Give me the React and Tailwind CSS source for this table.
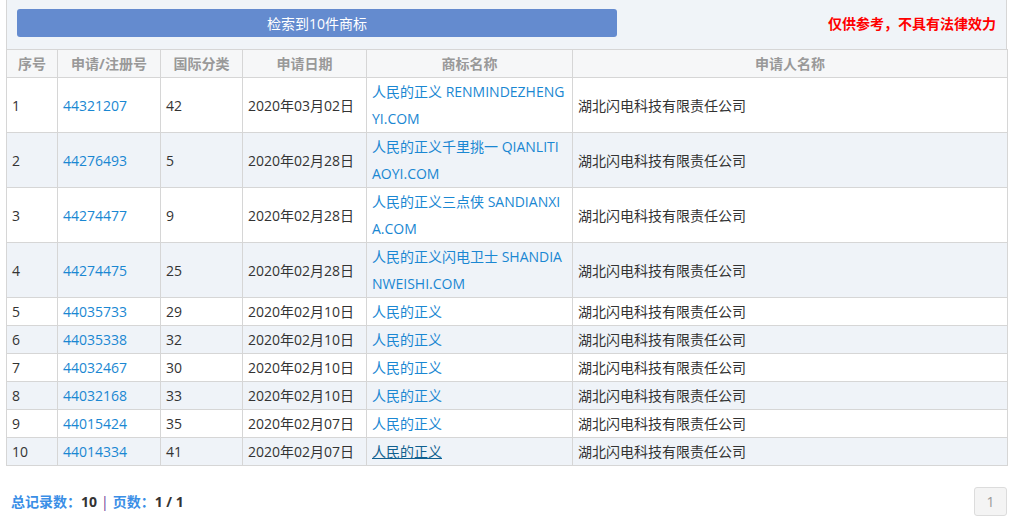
import React from "react";

const rows = [
  ["1", "44321207", "42", "2020年03月02日", ["人民的正义 RENMINDEZHENG", "YI.COM"]],
  ["2", "44276493", "5", "2020年02月28日", ["人民的正义千里挑一 QIANLITI", "AOYI.COM"]],
  ["3", "44274477", "9", "2020年02月28日", ["人民的正义三点侠 SANDIANXI", "A.COM"]],
  ["4", "44274475", "25", "2020年02月28日", ["人民的正义闪电卫士 SHANDIA", "NWEISHI.COM"]],
  ["5", "44035733", "29", "2020年02月10日", ["人民的正义"]],
  ["6", "44035338", "32", "2020年02月10日", ["人民的正义"]],
  ["7", "44032467", "30", "2020年02月10日", ["人民的正义"]],
  ["8", "44032168", "33", "2020年02月10日", ["人民的正义"]],
  ["9", "44015424", "35", "2020年02月07日", ["人民的正义"]],
  ["10", "44014334", "41", "2020年02月07日", ["人民的正义"]],
];

const font = { fontFamily: '"Open Sans","Noto Sans CJK SC",sans-serif' };

export default function App() {
  return (
    <div className="w-[1019px] h-[531px] bg-white text-[14px] text-[#333]" style={font}>
      <div className="ml-[6px] w-[1001px]">
        <div className="h-[49px] bg-[#f0f4f8] border-x border-[#d6d6d6] flex items-center justify-between pl-[10px] pr-[10px]">
          <div className="w-[600px] h-[28px] mt-[-3px] rounded-[3px] bg-[#648bcf] text-white flex items-center justify-center text-[14px]">
            检索到10件商标
          </div>
          <div className="text-[#ff0000] font-bold text-[14px] mt-[-3px]">仅供参考，不具有法律效力</div>
        </div>
        <table className="table-fixed border-collapse w-[1001px]">
          <colgroup>
            <col className="w-[51px]" />
            <col className="w-[103px]" />
            <col className="w-[82px]" />
            <col className="w-[124px]" />
            <col className="w-[206px]" />
            <col className="w-[435px]" />
          </colgroup>
          <thead>
            <tr className="h-[28px] bg-[#f6f7f8]">
              {["序号", "申请/注册号", "国际分类", "申请日期", "商标名称", "申请人名称"].map((h) => (
                <th key={h} className="border border-[#d6d6d6] text-[#999] font-bold text-[14px] leading-[27px] p-0 text-center">
                  {h}
                </th>
              ))}
            </tr>
          </thead>
          <tbody>
            {rows.map((r, i) => (
              <tr key={r[0]} className={i % 2 === 1 ? "bg-[#eff3f8]" : "bg-white"}>
                <td className="border border-[#d6d6d6] px-[5px] py-0 leading-[27px]">{r[0]}</td>
                <td className="border border-[#d6d6d6] px-[5px] py-0 leading-[27px] text-[#1a87d2]">{r[1]}</td>
                <td className="border border-[#d6d6d6] px-[5px] py-0 leading-[27px]">{r[2]}</td>
                <td className="border border-[#d6d6d6] px-[5px] py-0 leading-[27px]">{r[3]}</td>
                <td className="border border-[#d6d6d6] px-[5px] py-0 leading-[27px] text-[#1a87d2] whitespace-nowrap overflow-hidden">
                  {r[4].map((l, j) => (
                    <div key={j} className={i === 9 ? "text-[#0f5f8f]" : ""}>
                      {i === 9 ? <span className="underline">{l}</span> : l}
                    </div>
                  ))}
                </td>
                <td className="border border-[#d6d6d6] px-[5px] py-0 leading-[27px]">湖北闪电科技有限责任公司</td>
              </tr>
            ))}
          </tbody>
        </table>
        <div className="flex items-center justify-between mt-[21px] pl-[5px]">
          <div className="text-[14px] font-bold flex items-center">
            <span className="text-[#3a8ee6]">总记录数：</span>
            <span className="text-[#333]">10</span>
            <span className="text-[#6a3d9a] font-normal mx-[4px]">|</span>
            <span className="text-[#3a8ee6]">页数：</span>
            <span className="text-[#333]">1 / 1</span>
          </div>
          <div className="w-[33px] h-[29px] border border-[#dcdcdc] rounded-[3px] bg-[#f4f4f4] text-[#999] flex items-center justify-center text-[14px]">
            1
          </div>
        </div>
      </div>
    </div>
  );
}
